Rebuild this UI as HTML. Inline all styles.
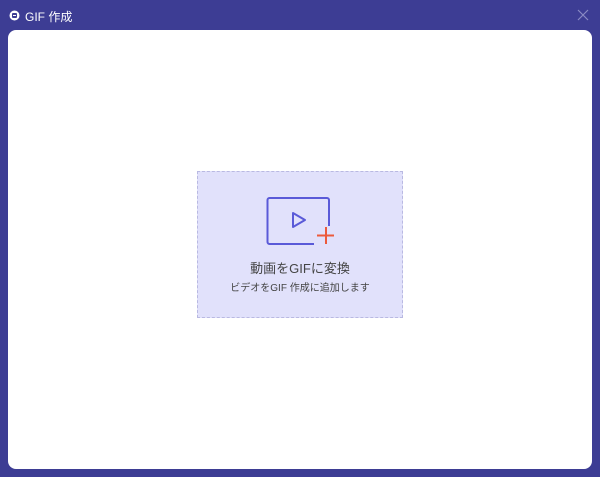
<!DOCTYPE html>
<html><head><meta charset="utf-8"><style>
body{margin:0;width:600px;height:477px;background:#3d3d94;position:relative;overflow:hidden;font-family:"Liberation Sans","Noto Sans CJK JP",sans-serif}
.t{position:absolute;left:25px;top:8px;color:#fff;font-size:12px}
.panel{position:absolute;left:8px;top:30px;width:584px;height:439px;background:#fff;border-radius:8px}
.box{position:absolute;left:197px;top:171px;width:204px;height:145px;background:#e1e1fb;border:1px dashed #b9b9e2}
.a{position:absolute;left:0;width:100%;text-align:center;color:#444}
</style></head><body>
<svg style="position:absolute;left:9px;top:10px" width="11" height="11" viewBox="0 0 11 11"><circle cx="5.5" cy="5.5" r="5" fill="#fff"/><rect x="3" y="3" width="5" height="5" rx="1" fill="#3d3d94"/><rect x="4" y="5" width="3" height="1" fill="#fff"/></svg>
<div class="t">GIF 作成</div>
<svg style="position:absolute;left:577px;top:9px" width="12" height="12"><path d="M1 1L11 11M11 1L1 11" stroke="#8a8ac4" stroke-width="1.2"/></svg>
<div class="panel"></div>
<div class="box">
<svg style="position:absolute;left:68px;top:25px" width="70" height="52" viewBox="0 0 70 52">
<path d="M48 47H3.5a2 2 0 0 1-2-2V3a2 2 0 0 1 2-2H61a2 2 0 0 1 2 2V29" fill="none" stroke="#5a5ad8" stroke-width="2"/>
<path d="M27 16L39 23L27 30Z" fill="none" stroke="#5a5ad8" stroke-width="2" stroke-linejoin="round"/>
<path d="M60 30V47M51 38.5H68" stroke="#ec5a3c" stroke-width="2"/>
</svg>
<div class="a" style="top:86px;font-size:13px">動画をGIFに変換</div>
<div class="a" style="top:107px;font-size:10px">ビデオをGIF 作成に追加します</div>
</div>
</body></html>
